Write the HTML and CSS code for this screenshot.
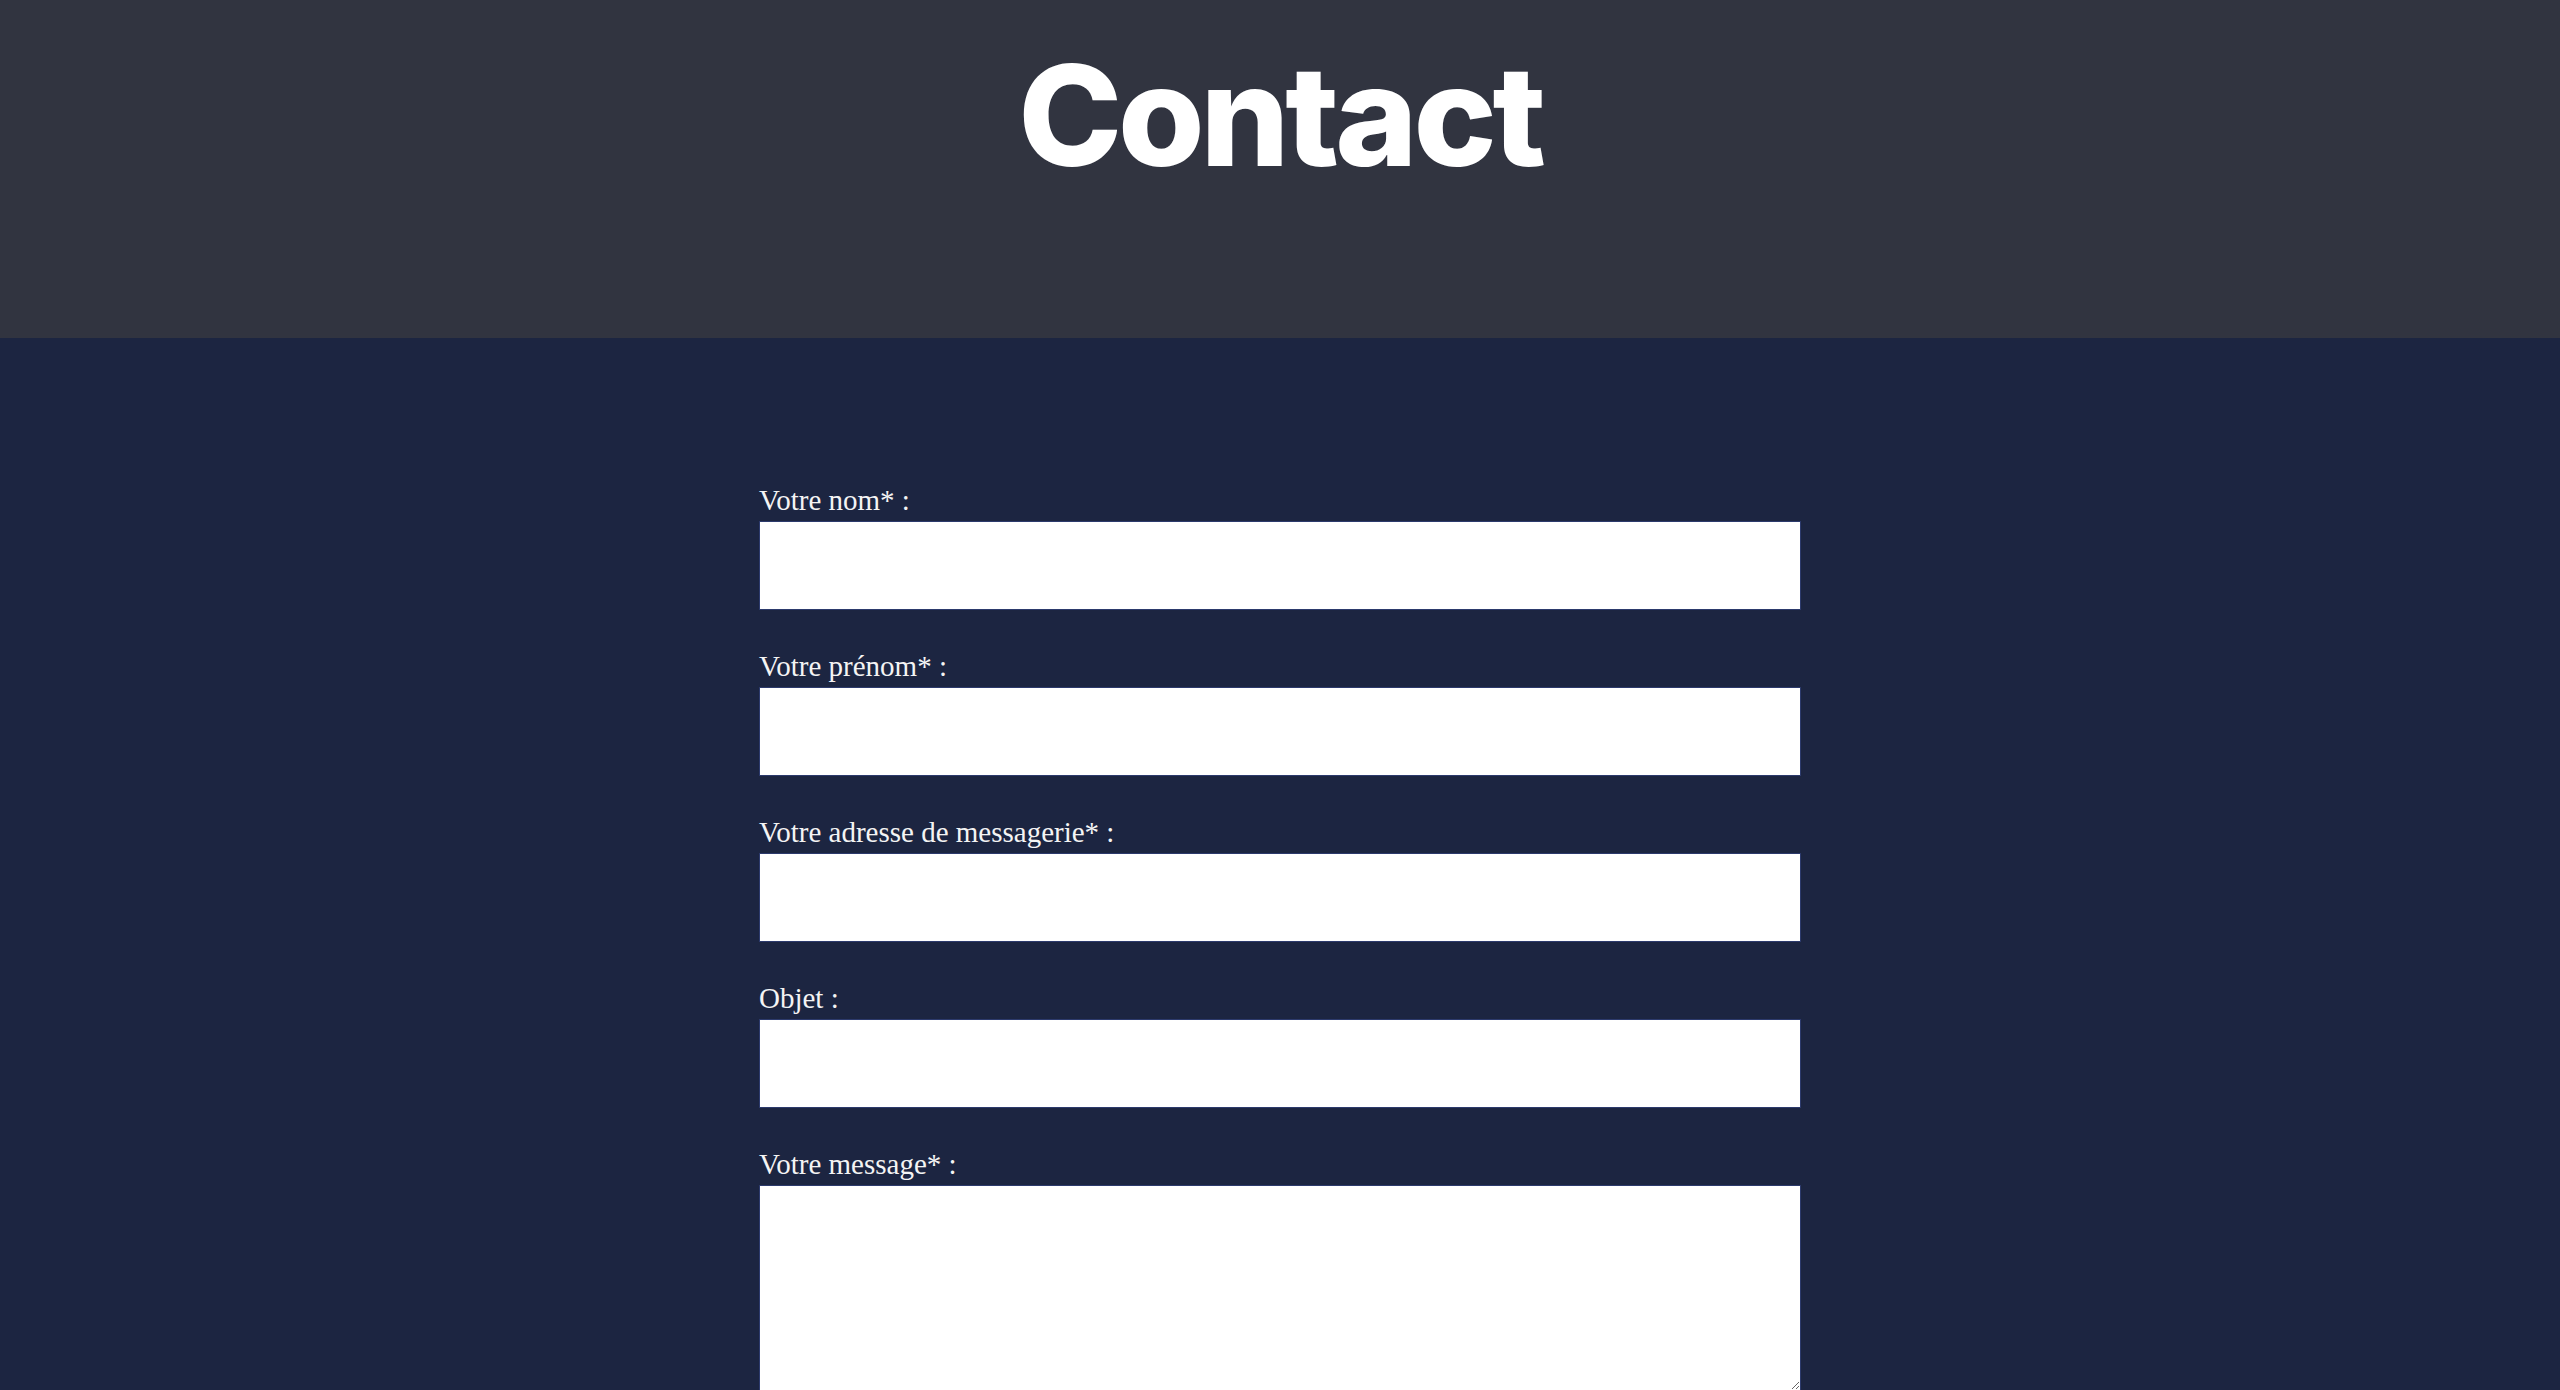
FILE: index.html
```html
<!DOCTYPE html>
<html lang="fr">
<head>
<meta charset="utf-8">
<title>Contact</title>
<link rel="stylesheet" href="styles.css">
</head>
<body>
<header class="page-header">
  <h1 class="page-title">Contact</h1>
</header>
<main class="page-main">
  <form class="contact-form">
    <div class="field">
      <label class="field-label" for="nom">Votre nom* :</label>
      <input class="field-input" type="text" id="nom" name="nom">
    </div>
    <div class="field">
      <label class="field-label" for="prenom">Votre prénom* :</label>
      <input class="field-input" type="text" id="prenom" name="prenom">
    </div>
    <div class="field">
      <label class="field-label" for="email">Votre adresse de messagerie* :</label>
      <input class="field-input" type="email" id="email" name="email">
    </div>
    <div class="field">
      <label class="field-label" for="objet">Objet :</label>
      <input class="field-input" type="text" id="objet" name="objet">
    </div>
    <div class="field">
      <label class="field-label" for="message">Votre message* :</label>
      <textarea class="field-textarea" id="message" name="message"></textarea>
    </div>
  </form>
</main>
</body>
</html>
```

FILE: styles.css
```css
html, body {
  margin: 0;
  padding: 0;
}

body {
  background: #1c2541;
  font-family: "Liberation Serif", "Times New Roman", serif;
  color: #f4f4f4;
}

.page-header {
  background: #313440;
  height: 338px;
  box-sizing: border-box;
  padding-top: 45px;
  display: flex;
  justify-content: center;
}

.page-title {
  margin: 0;
  font-family: Inter, "Liberation Sans", sans-serif;
  font-size: 140px;
  font-weight: 800;
  line-height: 1;
  letter-spacing: -0.03em;
  color: #ffffff;
}

.page-main {
  padding-top: 145px;
  display: flex;
  justify-content: center;
}

.contact-form {
  width: 1042px;
  display: flex;
  flex-direction: column;
  gap: 39px;
}

.field {
  display: flex;
  flex-direction: column;
}

.field-label {
  font-size: 29px;
  line-height: 34px;
  color: #f4f4f4;
}

.field-input,
.field-textarea {
  margin: 4px 0 0;
  box-sizing: border-box;
  width: 100%;
  background: #ffffff;
  border: 1px solid #2c3a6c;
  border-radius: 0;
  padding: 10px;
  font-family: "Liberation Serif", serif;
  font-size: 24px;
  outline: none;
}

.field-input {
  height: 89px;
}

.field-textarea {
  height: 206px;
  resize: vertical;
}
```
